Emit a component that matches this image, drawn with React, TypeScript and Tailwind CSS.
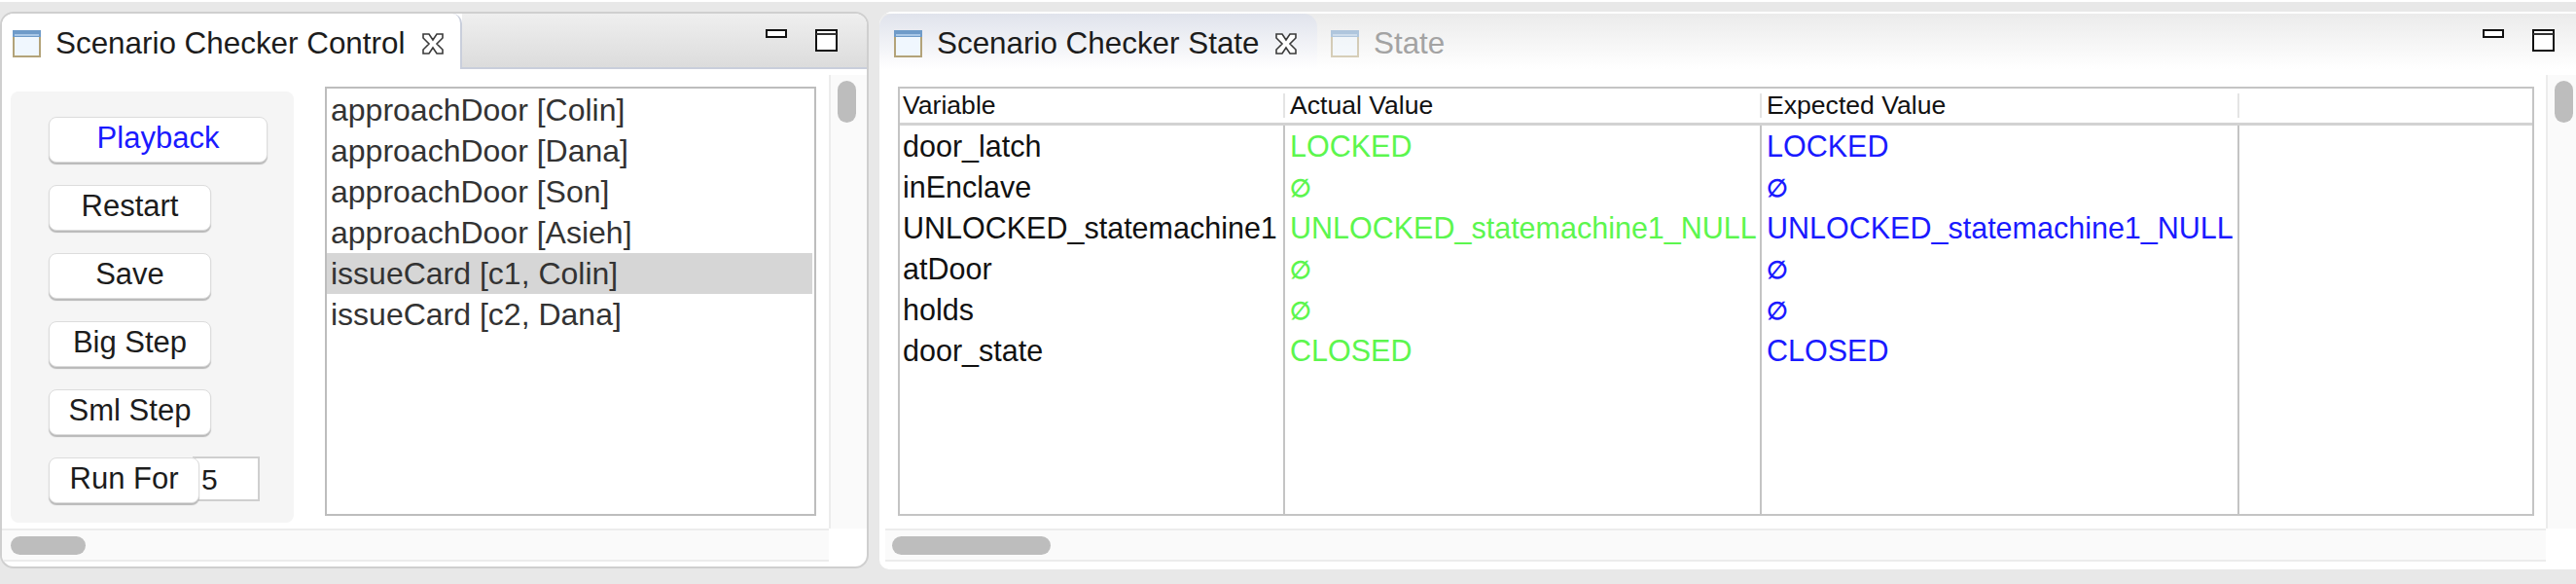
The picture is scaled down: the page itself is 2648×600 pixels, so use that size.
import React from 'react';

const FONT = "[font-family:'Liberation_Sans',Arial,sans-serif]";

function WindowIcon({ faded = false }: { faded?: boolean }) {
  return (
    <svg width="29" height="28" viewBox="0 0 29 28" className={faded ? 'shrink-0 opacity-50' : 'shrink-0'}>
      <rect x="1" y="1" width="27" height="26" fill="#f0f7fe" stroke="#b3a379" strokeWidth="2" />
      <rect x="0" y="0" width="29" height="7" fill="#6f9bc9" />
      <rect x="2" y="4" width="25" height="2" fill="#a9c7e6" />
    </svg>
  );
}

function CloseIcon() {
  return (
    <svg width="24" height="22" viewBox="0 0 24 22" className="shrink-0">
      <path
        d="M2 1H8L12 7L16 1H22V5L16 11L22 17V21H16L12 15L8 21H2V17L8 11L2 5Z"
        fill="#fff"
        stroke="#3a3a3a"
        strokeWidth="1.6"
      />
    </svg>
  );
}

function WindowControls() {
  return (
    <div className="flex items-start gap-[29px] pt-[16px]">
      <svg width="22" height="9" viewBox="0 0 22 9">
        <rect x="1" y="1" width="20" height="7" fill="#fff" stroke="#111" strokeWidth="2" />
      </svg>
      <svg width="23" height="23" viewBox="0 0 23 23">
        <rect x="1" y="1" width="21" height="21" fill="#fff" stroke="#111" strokeWidth="2" />
        <rect x="1" y="4" width="21" height="2" fill="#333" />
      </svg>
    </div>
  );
}

function Btn({ label, width, blue = false }: { label: string; width: string; blue?: boolean }) {
  return (
    <button
      className={`${width} relative z-10 h-[47px] shrink-0 rounded-[8px] border border-[#dcdcdc] bg-white pb-[4px] text-center text-[31px] leading-none shadow-[0_2px_1px_#b9b9b9] ${blue ? 'text-[#1a1aff]' : 'text-[#1c1c1c]'}`}
    >
      {label}
    </button>
  );
}

const commands = [
  'approachDoor [Colin]',
  'approachDoor [Dana]',
  'approachDoor [Son]',
  'approachDoor [Asieh]',
  'issueCard [c1, Colin]',
  'issueCard [c2, Dana]',
];

const variables = ['door_latch', 'inEnclave', 'UNLOCKED_statemachine1', 'atDoor', 'holds', 'door_state'];
const values = ['LOCKED', '∅', 'UNLOCKED_statemachine1_NULL', '∅', '∅', 'CLOSED'];

function Column({ items, color, width, pad }: { items: string[]; color: string; width: string; pad: string }) {
  return (
    <div className={`${width} ${pad} h-full shrink-0 border-r-2 border-[#c4c4c4] ${color}`}>
      {items.map((item, i) => (
        <div
          key={i}
          className={`flex h-[42px] items-center whitespace-nowrap leading-none ${item === '∅' ? 'pt-[2px] text-[25px] font-bold' : 'text-[30.5px]'}`}
        >
          {item}
        </div>
      ))}
    </div>
  );
}

function HScroll({ thumb, offset }: { thumb: string; offset: string }) {
  return (
    <div className={`h-[34px] border-y-2 border-[#ececec] bg-[#fafafa] ${offset} flex items-center`}>
      <div className={`${thumb} h-[19px] rounded-full bg-[#bdbdbd]`} />
    </div>
  );
}

function VScroll({ width }: { width: string }) {
  return (
    <div className={`${width} mt-[6px] shrink-0 border-l-2 border-[#ececec] bg-[#fafafa] pt-[6px]`}>
      <div className="ml-[7px] h-[43px] w-[19px] rounded-full bg-[#bdbdbd]" />
    </div>
  );
}

export default function App() {
  return (
    <div className={`${FONT} h-[600px] w-[2648px] overflow-hidden bg-white pt-[2px]`}>
      <div className="flex h-[598px] items-start bg-[#e8e8e8] pt-[10px]">
        {/* control view */}
        <div className="flex h-[572px] w-[893px] shrink-0 flex-col overflow-hidden rounded-[14px] border-2 border-[#cfcfcf] bg-white">
          <div className="flex h-[57px] shrink-0">
            <div className="flex w-[473px] shrink-0 items-center rounded-tr-[10px] border-r-2 border-[#c9cedb] bg-white pt-[4px] pl-[11px]">
              <WindowIcon />
              <span className="ml-[15px] whitespace-nowrap text-[31.4px] leading-none text-[#1c1c1c]">Scenario Checker Control</span>
              <span className="ml-[17px]"><CloseIcon /></span>
            </div>
            <div className="flex flex-1 justify-end border-b-2 border-[#c9cedb] bg-gradient-to-b from-[#efefef] to-[#dcdcdc] pr-[30px]">
              <WindowControls />
            </div>
          </div>
          <div className="flex h-[472px] shrink-0">
            <div className="flex w-[850px] shrink-0 items-start pl-[9px]">
              <div className="mt-[23px] flex h-[443px] w-[291px] shrink-0 flex-col gap-[23px] rounded-[8px] bg-[#f5f5f5] pl-[39px] pt-[26px]">
                <Btn label="Playback" width="w-[225px]" blue />
                <Btn label="Restart" width="w-[167px]" />
                <Btn label="Save" width="w-[167px]" />
                <Btn label="Big Step" width="w-[167px]" />
                <Btn label="Sml Step" width="w-[167px]" />
                <div className="flex items-start">
                  <Btn label="Run For" width="w-[155px]" />
                  <div className="-ml-[7px] -mt-[1px] flex h-[46px] w-[69px] items-center border-2 border-[#cfcfcf] bg-white pl-[7px] pt-[2px] text-[30px] leading-none text-[#1c1c1c]">5</div>
                </div>
              </div>
              <div className="ml-[32px] mt-[18px] h-[441px] w-[505px] shrink-0 border-2 border-[#bdbdbd] bg-white pr-[2px] pt-[1px]">
                {commands.map((c, i) => (
                  <div
                    key={c}
                    className={`flex h-[42px] items-center pl-[4px] text-[32px] leading-none text-[#333333] ${i === 4 ? 'bg-[#d6d6d6]' : ''}`}
                  >
                    {c}
                  </div>
                ))}
              </div>
            </div>
            <VScroll width="w-[39px]" />
          </div>
          <HScroll thumb="w-[77px]" offset="w-[850px] pl-[9px]" />
        </div>

        {/* state view */}
        <div className="ml-[11px] flex h-[573px] min-w-0 flex-1 flex-col overflow-hidden rounded-tl-[14px] rounded-bl-[10px] bg-white">
          <div className="flex h-[59px] shrink-0 border-t-2 border-white bg-gradient-to-b from-[#ebebeb] to-white">
            <div className="flex w-[450px] shrink-0 items-center rounded-t-[14px] bg-gradient-to-b from-[#e0e3ec] to-white pt-[4px] pl-[15px]">
              <WindowIcon />
              <span className="ml-[15px] whitespace-nowrap text-[31.4px] leading-none text-[#1c1c1c]">Scenario Checker State</span>
              <span className="ml-[15px]"><CloseIcon /></span>
            </div>
            <div className="flex items-center pt-[4px] pl-[14px]">
              <WindowIcon faded />
              <span className="ml-[15px] text-[31.4px] leading-none text-[#a3a3a3]">State</span>
            </div>
            <div className="ml-auto pr-[22px]">
              <WindowControls />
            </div>
          </div>
          <div className="flex h-[472px] shrink-0">
            <div className="w-[1713px] shrink-0 pl-[19px] pt-[18px]">
              <div className="flex h-[441px] w-[1682px] flex-col border-2 border-[#c4c4c4] bg-white text-[#111111]">
                <div className="flex h-[38px] shrink-0 border-b-[3px] border-[#d2d2d2] text-[26.6px] leading-none">
                  {['Variable', 'Actual Value', 'Expected Value', ''].map((h, i) => (
                    <div
                      key={i}
                      className={`${['w-[396px] border-r-2 pl-[3px]', 'w-[490px] border-r-2 pl-[5px]', 'w-[491px] border-r-2 pl-[5px]', 'flex-1'][i]} my-[5px] flex items-center border-[#e4e4e4]`}
                    >
                      <span className="whitespace-nowrap">{h}</span>
                    </div>
                  ))}
                </div>
                <div className="flex min-h-0 flex-1">
                  <Column items={variables} color="text-[#111111]" width="w-[396px]" pad="pl-[3px]" />
                  <Column items={values} color="text-[#5cf64e]" width="w-[490px]" pad="pl-[5px]" />
                  <Column items={values} color="text-[#1a1aff]" width="w-[491px]" pad="pl-[5px]" />
                </div>
              </div>
            </div>
            <VScroll width="w-[31px]" />
          </div>
          <HScroll thumb="w-[163px]" offset="w-[1707px] pl-[7px] ml-[6px]" />
        </div>
      </div>
    </div>
  );
}
